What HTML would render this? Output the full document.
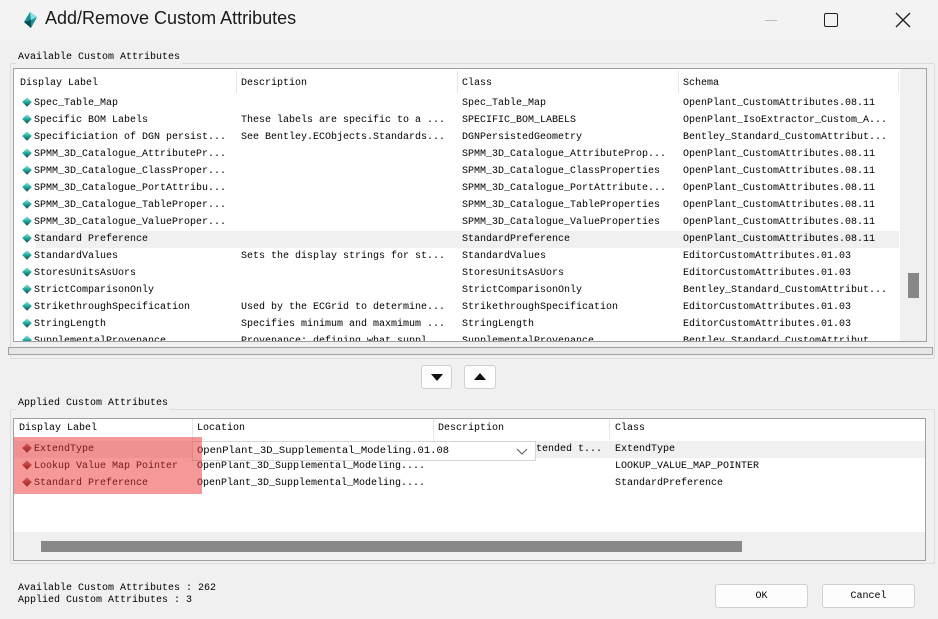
<!DOCTYPE html>
<html><head><style>
*{box-sizing:border-box;margin:0;padding:0}
body{width:938px;height:619px;background:#f0f0f0;position:relative;overflow:hidden;font-family:"Liberation Mono","Noto Sans CJK SC",monospace;font-size:10px;color:#000}
.a{position:absolute;white-space:nowrap}
.title{left:0;top:0;width:938px;height:40px;background:#f3f3f3}
.box{position:absolute;background:#fff;border:1px solid #a0a0a0}
.hd{position:absolute;height:17px;line-height:17px}
.sep{position:absolute;width:1px;background:#e5e5e5}
.ic{display:inline-block;width:8px;height:8px;background:linear-gradient(135deg,#9ee 0%,#2a9 50%,#145 100%);transform:rotate(45deg) scale(.85);margin-right:3px;vertical-align:-1px}
.ic2{background:linear-gradient(135deg,#c99 0%,#844 50%,#422 100%)}
.btn{position:absolute;background:#fdfdfd;border:1px solid #d0d0d0;border-radius:3px;text-align:center}
.grp{position:absolute;border:1px solid #dcdcdc;border-radius:2px}
</style></head><body>
<div class="a title"></div>
<svg class="a" style="left:22px;top:11px" width="16" height="18"><polygon points="8,1 15,6 9,17 2,11" fill="#1d8f96"/><polygon points="8,1 15,6 9,9" fill="#7fe0e6"/><polygon points="2,11 9,9 9,17" fill="#0a4b52"/></svg>
<div class="a" style="left:45px;top:8px;font-family:'Liberation Sans',sans-serif;font-size:18px;color:#1a1a1a">Add/Remove Custom Attributes</div>
<div class="a" style="left:765px;top:20px;width:12px;height:1px;background:#bbb"></div>
<div class="a" style="left:824px;top:13px;width:14px;height:14px;border:1.5px solid #222;border-radius:2px"></div>
<svg class="a" style="left:895px;top:12px" width="16" height="16"><path d="M1 1L15 15M15 1L1 15" stroke="#222" stroke-width="1.4"/></svg>

<div class="grp" style="left:10px;top:63px;width:925px;height:296px"></div>
<div class="a" style="left:16px;top:51px;background:#f0f0f0;padding:0 2px;line-height:13px">Available Custom Attributes</div>
<div class="box" style="left:13px;top:68px;width:914px;height:274px;overflow:hidden">
 <div class="hd" style="left:6px;top:6px">Display Label</div>
 <div class="hd" style="left:227px;top:6px">Description</div>
 <div class="hd" style="left:448px;top:6px">Class</div>
 <div class="hd" style="left:669px;top:6px">Schema</div>
 <div class="sep" style="left:222px;top:2px;height:22px"></div>
 <div class="sep" style="left:443px;top:2px;height:22px"></div>
 <div class="sep" style="left:664px;top:2px;height:22px"></div>
 <div class="sep" style="left:884px;top:2px;height:22px"></div>
 <div class="a" style="left:886px;top:0;width:27px;height:273px;background:#f0f0f0"></div>
 <div class="a" style="left:894px;top:204px;width:11px;height:25px;background:#888"></div>
 <div class="a" style="left:22px;top:162px;width:863px;height:17px;background:#f0f0f0"></div>
 <div class="a" style="left:9px;top:26px;line-height:17px">
<div><span class="ic"></span>Spec_Table_Map</div>
<div><span class="ic"></span>Specific BOM Labels</div>
<div><span class="ic"></span>Specificiation of DGN persist...</div>
<div><span class="ic"></span>SPMM_3D_Catalogue_AttributePr...</div>
<div><span class="ic"></span>SPMM_3D_Catalogue_ClassProper...</div>
<div><span class="ic"></span>SPMM_3D_Catalogue_PortAttribu...</div>
<div><span class="ic"></span>SPMM_3D_Catalogue_TableProper...</div>
<div><span class="ic"></span>SPMM_3D_Catalogue_ValueProper...</div>
<div><span class="ic"></span>Standard Preference</div>
<div><span class="ic"></span>StandardValues</div>
<div><span class="ic"></span>StoresUnitsAsUors</div>
<div><span class="ic"></span>StrictComparisonOnly</div>
<div><span class="ic"></span>StrikethroughSpecification</div>
<div><span class="ic"></span>StringLength</div>
<div><span class="ic"></span>SupplementalProvenance</div>
 </div>
 <div class="a" style="left:227px;top:26px;line-height:17px">
<div>&nbsp;</div><div>These labels are specific to a ...</div><div>See Bentley.ECObjects.Standards...</div><div>&nbsp;</div><div>&nbsp;</div><div>&nbsp;</div><div>&nbsp;</div><div>&nbsp;</div><div>&nbsp;</div><div>Sets the display strings for st...</div><div>&nbsp;</div><div>&nbsp;</div><div>Used by the ECGrid to determine...</div><div>Specifies minimum and maxmimum ...</div><div>Provenance: defining what suppl...</div>
 </div>
 <div class="a" style="left:448px;top:26px;line-height:17px">
<div>Spec_Table_Map</div><div>SPECIFIC_BOM_LABELS</div><div>DGNPersistedGeometry</div><div>SPMM_3D_Catalogue_AttributeProp...</div><div>SPMM_3D_Catalogue_ClassProperties</div><div>SPMM_3D_Catalogue_PortAttribute...</div><div>SPMM_3D_Catalogue_TableProperties</div><div>SPMM_3D_Catalogue_ValueProperties</div><div>StandardPreference</div><div>StandardValues</div><div>StoresUnitsAsUors</div><div>StrictComparisonOnly</div><div>StrikethroughSpecification</div><div>StringLength</div><div>SupplementalProvenance</div>
 </div>
 <div class="a" style="left:669px;top:26px;line-height:17px">
<div>OpenPlant_CustomAttributes.08.11</div><div>OpenPlant_IsoExtractor_Custom_A...</div><div>Bentley_Standard_CustomAttribut...</div><div>OpenPlant_CustomAttributes.08.11</div><div>OpenPlant_CustomAttributes.08.11</div><div>OpenPlant_CustomAttributes.08.11</div><div>OpenPlant_CustomAttributes.08.11</div><div>OpenPlant_CustomAttributes.08.11</div><div>OpenPlant_CustomAttributes.08.11</div><div>EditorCustomAttributes.01.03</div><div>EditorCustomAttributes.01.03</div><div>Bentley_Standard_CustomAttribut...</div><div>EditorCustomAttributes.01.03</div><div>EditorCustomAttributes.01.03</div><div>Bentley_Standard_CustomAttribut...</div>
 </div>
</div>
<div class="a" style="left:8px;top:347px;width:925px;height:8px;border:1px solid #a0a0a0;background:#e6e6e6"></div>

<div class="btn" style="left:421px;top:365px;width:31px;height:24px"><svg width="14" height="10" style="margin-top:7px"><polygon points="1,1 13,1 7,8" fill="#111"/></svg></div>
<div class="btn" style="left:464px;top:365px;width:32px;height:24px"><svg width="14" height="10" style="margin-top:6px"><polygon points="1,8 13,8 7,1" fill="#111"/></svg></div>

<div class="grp" style="left:10px;top:409px;width:925px;height:155px"></div>
<div class="a" style="left:16px;top:397px;background:#f0f0f0;padding:0 2px;line-height:13px">Applied Custom Attributes</div>
<div class="box" style="left:13px;top:418px;width:913px;height:143px;overflow:hidden">
 <div class="hd" style="left:5px;top:1px">Display Label</div>
 <div class="hd" style="left:183px;top:1px">Location</div>
 <div class="hd" style="left:424px;top:1px">Description</div>
 <div class="hd" style="left:601px;top:1px">Class</div>
 <div class="sep" style="left:178px;top:0;height:21px"></div>
 <div class="sep" style="left:419px;top:0;height:21px"></div>
 <div class="sep" style="left:595px;top:0;height:21px"></div>
 <div class="a" style="left:0;top:22px;width:912px;height:17px;background:#f0f0f0"></div>
 <div class="a" style="left:9px;top:22px;line-height:17px">
<div><span class="ic ic2"></span>ExtendType</div><div><span class="ic ic2"></span>Lookup Value Map Pointer</div><div><span class="ic ic2"></span>Standard Preference</div>
 </div>
 <div class="a" style="left:183px;top:22px;line-height:17px"><div>&nbsp;</div><div>OpenPlant_3D_Supplemental_Modeling....</div><div>OpenPlant_3D_Supplemental_Modeling....</div></div>
 <div class="a" style="left:522px;top:22px;line-height:17px">tended t...</div>
 <div class="a" style="left:601px;top:22px;line-height:17px"><div>ExtendType</div><div>LOOKUP_VALUE_MAP_POINTER</div><div>StandardPreference</div></div>
 <div class="a" style="left:178px;top:22px;width:344px;height:20px;background:#fff;border:1px solid #d5d5d5;line-height:18px;padding-left:4px;font-size:10.5px">OpenPlant_3D_Supplemental_Modeling.01.08
  <svg class="a" style="left:323px;top:6px" width="12" height="8"><path d="M1 1L6 6L11 1" stroke="#555" fill="none"/></svg></div>
 <div class="a" style="left:0;top:18px;width:188px;height:57px;background:rgba(240,50,50,.5)"></div>
 <div class="a" style="left:0;top:113px;width:912px;height:30px;background:#f0f0f0"></div>
 <div class="a" style="left:27px;top:122px;width:701px;height:11px;background:#888"></div>
</div>

<div class="a" style="left:18px;top:583px;line-height:12px;font-size:10px">Available Custom Attributes : 262<br>Applied Custom Attributes : 3</div>
<div class="btn" style="left:715px;top:584px;width:93px;height:24px;line-height:24px">OK</div>
<div class="btn" style="left:822px;top:584px;width:93px;height:24px;line-height:24px">Cancel</div>
</body></html>
